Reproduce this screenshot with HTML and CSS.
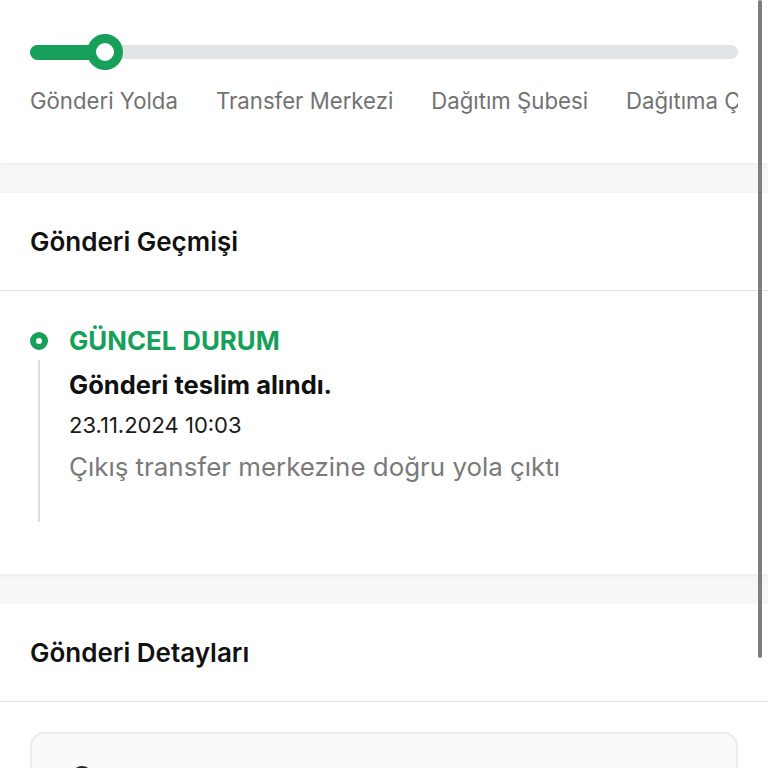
FILE: index.html
```html
<!DOCTYPE html>
<html lang="tr">
<head>
<meta charset="utf-8">
<title>Gönderi Takibi</title>
<link rel="stylesheet" href="styles.css">
</head>
<body>
<div class="page">
  <section class="card tracker">
    <div class="track">
      <div class="track-fill" style="width: 75px"></div>
      <div class="knob"></div>
    </div>
    <div class="steps">
      <span class="step">Gönderi Yolda</span>
      <span class="step">Transfer Merkezi</span>
      <span class="step">Dağıtım Şubesi</span>
      <span class="step">Dağıtıma Çıktı</span>
    </div>
  </section>

  <section class="card history">
    <header class="card-head"><h2>Gönderi Geçmişi</h2></header>
    <div class="timeline">
      <div class="event">
        <div class="rail">
          <span class="dot"></span>
          <span class="line"></span>
        </div>
        <div class="event-body">
          <div class="status">GÜNCEL DURUM</div>
          <div class="event-title">Gönderi teslim alındı.</div>
          <div class="event-date">23.11.2024 10:03</div>
          <div class="event-desc">Çıkış transfer merkezine doğru yola çıktı</div>
        </div>
      </div>
    </div>
  </section>

  <section class="card details">
    <header class="card-head"><h2>Gönderi Detayları</h2></header>
    <div class="details-body">
      <div class="info-box">
        <svg class="info-icon" width="24" height="24" viewBox="0 0 24 24" fill="none" stroke="#222" stroke-width="2.2"><circle cx="12" cy="12" r="9"/></svg>
      </div>
    </div>
  </section>

  <div class="scrollbar"></div>
</div>
</body>
</html>
```

FILE: styles.css
```css
* { box-sizing: border-box; }
html, body { margin: 0; padding: 0; }
body {
  background: #f7f7f7;
  font-family: Inter, "Noto Sans", "Liberation Sans", sans-serif;
  color: #111;
  height: 768px;
  overflow: hidden;
}
.page {
  position: relative;
  display: flex;
  flex-direction: column;
  gap: 30px;
}
.card {
  background: #fff;
  box-shadow: 0 2px 5px rgba(0, 0, 0, 0.035);
}
.tracker {
  height: 163px;
  padding: 34px 30px 0 30px;
}
.track {
  position: relative;
  height: 36px;
  width: 708px;
  display: flex;
  align-items: center;
}
.track::before {
  content: "";
  display: block;
  width: 100%;
  height: 14px;
  border-radius: 7px;
  background: #e3e4e6;
}
.track-fill {
  position: absolute;
  left: 0;
  top: 11px;
  height: 15px;
  border-radius: 8px;
  background: #16a05a;
}
.knob {
  position: absolute;
  left: 57px;
  top: 0;
  width: 36px;
  height: 36px;
  border-radius: 50%;
  background: #fff;
  border: 9px solid #16a05a;
}
.steps {
  display: flex;
  gap: 38px;
  width: 708px;
  overflow: hidden;
  white-space: nowrap;
  margin-top: 17px;
  font-size: 22.2px;
  line-height: 28px;
  color: #727272;
}
.step { flex: none; }

.card-head {
  height: 98px;
  display: flex;
  align-items: center;
  padding: 0 30px;
  border-bottom: 1px solid #e2e2e2;
}
.card-head h2 {
  margin: 0;
  font-size: 26px;
  font-weight: 600;
  color: #111;
}
.history { height: 381px; }
.timeline { padding: 36px 30px 0 30px; }
.event { display: flex; gap: 21px; }
.rail {
  width: 18px;
  display: flex;
  flex-direction: column;
  align-items: center;
  padding-top: 5px;
}
.dot {
  width: 18px;
  height: 18px;
  border-radius: 50%;
  border: 6px solid #16a05a;
  background: #fff;
  flex: none;
}
.line {
  width: 2px;
  height: 162px;
  margin-top: 10px;
  background: #dddddd;
}
.status {
  color: #16a05a;
  font-size: 25.8px;
  font-weight: 700;
  line-height: 28px;
}
.event-title {
  margin-top: 16px;
  font-size: 25.5px;
  font-weight: 700;
  line-height: 28px;
  color: #111;
}
.event-date {
  margin-top: 12px;
  font-size: 22px;
  line-height: 28px;
  color: #1a1a1a;
}
.event-desc {
  margin-top: 14px;
  font-size: 25.9px;
  line-height: 28px;
  color: #7a7a7a;
}
.details { flex: 1; min-height: 300px; }
.details-body { padding: 30px; }
.info-box {
  height: 120px;
  border: 2px solid #ececec;
  border-radius: 14px;
  background: #fafafa;
  padding: 30px 0 0 38px;
}
.info-icon { display: block; }
.scrollbar {
  position: absolute;
  top: 0;
  left: 758px;
  width: 4px;
  height: 658px;
  border-radius: 2px;
  background: #7d7d7d;
}
```
